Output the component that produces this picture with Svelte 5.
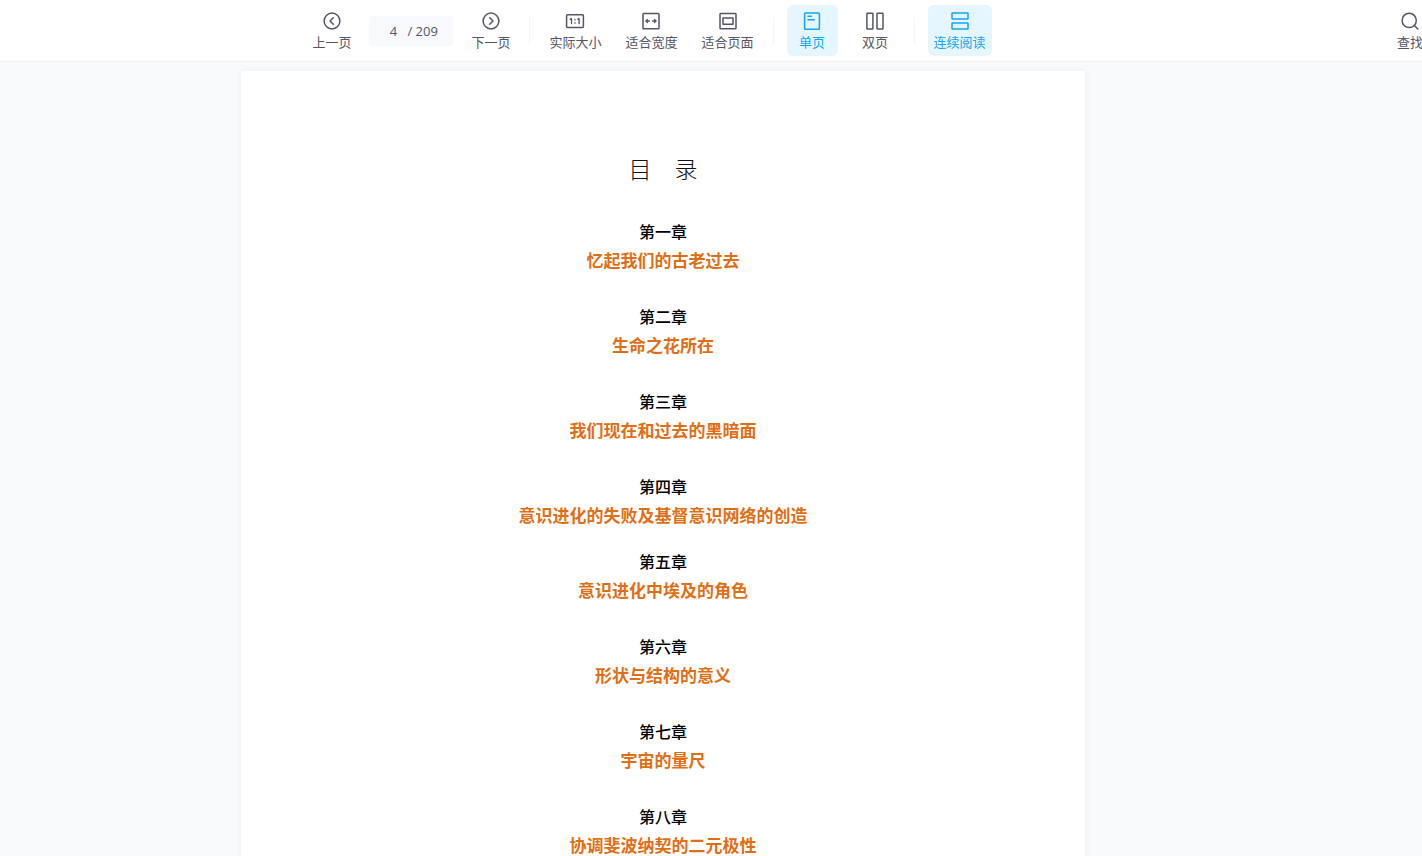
<script lang="ts">
  type Tool = { id: string; label: string };

  const sizeTools: Tool[] = [
    { id: 'actual', label: '实际大小' },
    { id: 'width', label: '适合宽度' },
    { id: 'page', label: '适合页面' }
  ];

  const layoutTools: Tool[] = [
    { id: 'single', label: '单页' },
    { id: 'double', label: '双页' }
  ];

  const chapters = [
    { name: '第一章', title: '忆起我们的古老过去' },
    { name: '第二章', title: '生命之花所在' },
    { name: '第三章', title: '我们现在和过去的黑暗面' },
    { name: '第四章', title: '意识进化的失败及基督意识网络的创造', tight: true },
    { name: '第五章', title: '意识进化中埃及的角色' },
    { name: '第六章', title: '形状与结构的意义' },
    { name: '第七章', title: '宇宙的量尺' },
    { name: '第八章', title: '协调斐波纳契的二元极性' }
  ];

  const total = 209;
  let current = $state(4);
  let layout = $state('single');
  let continuous = $state(true);

  function go(step: number) {
    current = Math.min(total, Math.max(1, Number(current) + step));
  }
</script>

{#snippet icon(id: string)}
  <svg class="icon" viewBox="0 0 20 20" aria-hidden="true">
    {#if id === 'prev'}
      <circle cx="10" cy="10" r="7.9" />
      <path d="M11.3 6.7 8 10l3.3 3.3" />
    {:else if id === 'next'}
      <circle cx="10" cy="10" r="7.9" />
      <path d="M8.7 6.7 12 10l-3.3 3.3" />
    {:else if id === 'actual'}
      <rect x="1.6" y="3.8" width="16.8" height="12.6" rx="0.8" />
      <path class="fine" d="m5.2 8.4 1.3-.9v5.2M12.8 8.4l1.3-.9v5.2M10 8.3v.6M10 11.6v.6" />
    {:else if id === 'width'}
      <rect x="2" y="2.4" width="16" height="15.4" rx="0.8" />
      <path class="fine" d="M8.5 10H5.2M6.5 8.4 4.9 10l1.6 1.6M11.5 10h3.3M13.5 8.4l1.6 1.6-1.6 1.6" />
    {:else if id === 'page'}
      <rect x="2" y="2.4" width="16" height="15.4" rx="0.8" />
      <rect x="5" y="7" width="10" height="6.2" />
    {:else if id === 'single'}
      <rect x="2.6" y="1.9" width="14.8" height="16.4" rx="0.8" />
      <path d="M6 5.3h3.4M6 8.8h6.4" />
    {:else if id === 'double'}
      <rect x="1.9" y="2.2" width="6" height="15.8" rx="0.6" />
      <rect x="12" y="2.2" width="6" height="15.8" rx="0.6" />
    {:else if id === 'continuous'}
      <rect x="2" y="2" width="16" height="6" rx="0.6" />
      <rect x="2" y="12" width="16" height="6" rx="0.6" />
    {:else if id === 'search'}
      <circle cx="9.2" cy="9.4" r="7.1" />
      <path d="m14.3 14.5 3.5 3.5" />
    {/if}
  </svg>
{/snippet}

<div class="viewer">
  <header class="toolbar">
    <div class="tools">
      <button type="button" class="tool" onclick={() => go(-1)}>
        {@render icon('prev')}
        <span>上一页</span>
      </button>
      <label class="pager">
        <input type="text" aria-label="页码" bind:value={current} />
        <span>/ {total}</span>
      </label>
      <button type="button" class="tool" onclick={() => go(1)}>
        {@render icon('next')}
        <span>下一页</span>
      </button>
      <span class="divider"></span>
      {#each sizeTools as tool}
        <button type="button" class="tool">
          {@render icon(tool.id)}
          <span>{tool.label}</span>
        </button>
      {/each}
      <span class="divider"></span>
      {#each layoutTools as tool}
        <button
          type="button"
          class="tool"
          class:active={layout === tool.id}
          aria-pressed={layout === tool.id}
          onclick={() => (layout = tool.id)}
        >
          {@render icon(tool.id)}
          <span>{tool.label}</span>
        </button>
      {/each}
      <span class="divider"></span>
      <button
        type="button"
        class="tool"
        class:active={continuous}
        aria-pressed={continuous}
        onclick={() => (continuous = !continuous)}
      >
        {@render icon('continuous')}
        <span>连续阅读</span>
      </button>
    </div>
    <button type="button" class="tool search">
      {@render icon('search')}
      <span>查找</span>
    </button>
  </header>

  <main class="canvas">
    <article class="sheet">
      <h1>目&#x3000;录</h1>
      {#each chapters as chapter}
        <section class="chapter" class:tight={chapter.tight}>
          <h2>{chapter.name}</h2>
          <a href="#{chapter.name}">{chapter.title}</a>
        </section>
      {/each}
    </article>
  </main>
</div>

<style>
  :global(body) {
    margin: 0;
  }

  .viewer {
    display: flex;
    flex-direction: column;
    height: 100vh;
    overflow: hidden;
    background: #f8fafc;
    font-family: 'Noto Sans CJK SC', sans-serif;
  }

  .toolbar {
    display: flex;
    flex: none;
    padding: 5px 0;
    background: #ffffff;
  }

  .tools {
    display: flex;
    flex: 1;
    align-items: center;
    justify-content: center;
    gap: 12px;
    padding-right: 93px;
  }

  .tool {
    display: flex;
    flex: none;
    flex-direction: column;
    align-items: center;
    gap: 2px;
    box-sizing: border-box;
    min-width: 51px;
    padding: 6px 6px 5px;
    border: none;
    border-radius: 6px;
    background: none;
    color: #555666;
    font-family: inherit;
    font-size: 13px;
    font-weight: 400;
    line-height: 18px;
    white-space: nowrap;
    cursor: pointer;
  }

  .tool.active {
    background: #e6f6ff;
    color: #12a5f4;
  }

  /* runs past the right edge when the window is narrow */
  .search {
    min-width: 38px;
    margin-right: -7px;
  }

  .icon {
    width: 20px;
    height: 20px;
    fill: none;
    stroke: currentColor;
    stroke-width: 1.5;
    stroke-linecap: round;
    stroke-linejoin: round;
  }

  .fine {
    stroke-width: 1.3;
  }

  .pager {
    display: flex;
    align-items: center;
    box-sizing: border-box;
    width: 84px;
    height: 30px;
    border-radius: 4px;
    background: #f8f9fd;
    color: #555666;
    font-family: 'Open Sans', 'Noto Sans', sans-serif;
    font-size: 13px;
  }

  .pager input {
    width: 28px;
    margin: 0 0 0 10px;
    padding: 0;
    border: none;
    background: none;
    color: inherit;
    font: inherit;
    text-align: center;
    outline: none;
  }

  .divider {
    width: 1px;
    height: 28px;
    margin: 0 1px;
    background: #f3f4f6;
  }

  .canvas {
    flex: 1;
    min-height: 0;
    padding: 9px 96px 0 0;
    border-top: 1px solid #f0f2f4;
    overflow-y: auto;
    scrollbar-width: none;
  }

  .sheet {
    box-sizing: border-box;
    max-width: 844px;
    margin: 0 auto;
    padding: 79px 40px;
    border-radius: 2px;
    background: #ffffff;
    box-shadow: 0 0 8px rgba(30, 50, 80, 0.06);
    text-align: center;
  }

  h1 {
    margin: 0 0 31px;
    color: #111111;
    font-size: 23px;
    font-weight: 300;
    line-height: 36px;
  }

  .chapter {
    display: flex;
    flex-direction: column;
    align-items: center;
    margin-bottom: 28px;
  }

  .chapter.tight {
    margin-bottom: 18px;
  }

  h2 {
    margin: 0;
    color: #000000;
    font-size: 16px;
    font-weight: 500;
    line-height: 28px;
  }

  .chapter a {
    color: #df6f16;
    font-size: 17px;
    font-weight: 700;
    line-height: 29px;
    text-decoration: none;
  }
</style>
